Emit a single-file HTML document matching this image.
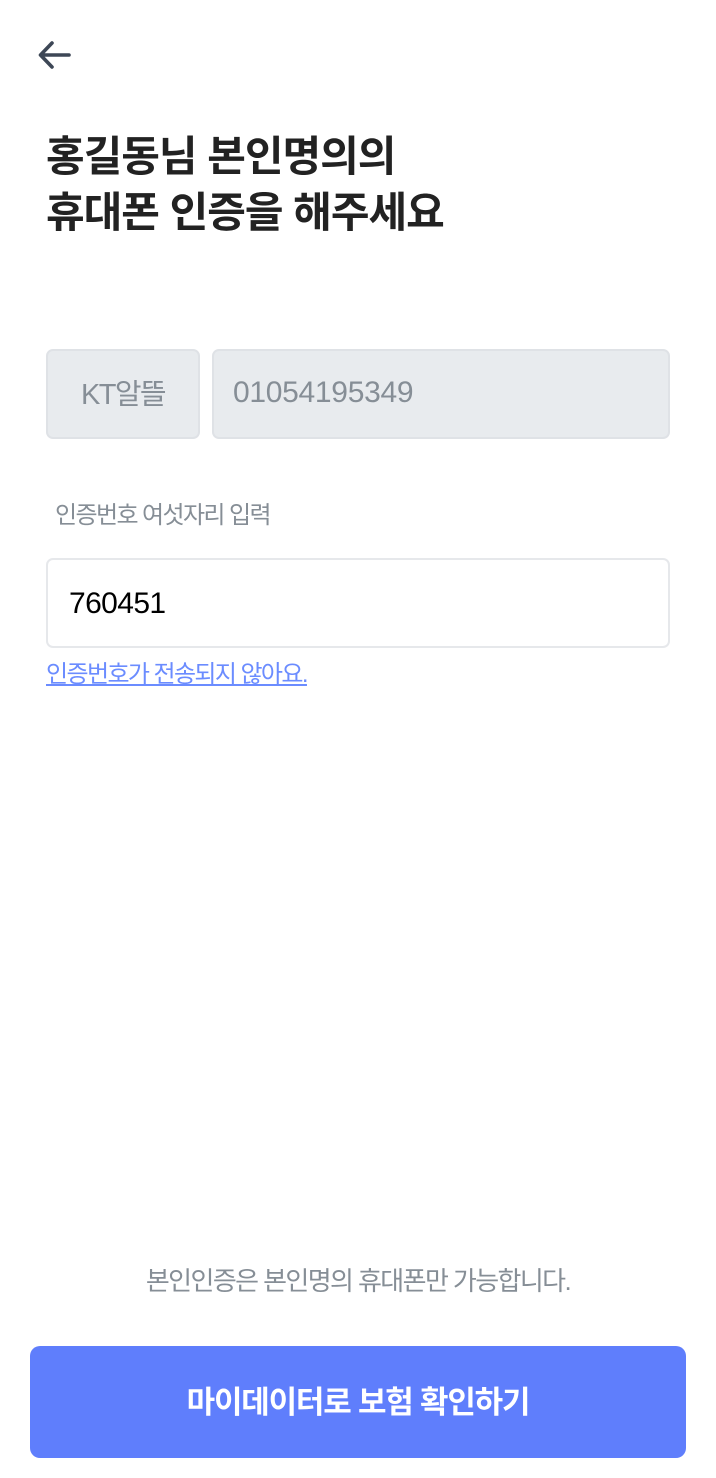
<!DOCTYPE html>
<html><head><meta charset="utf-8"><style>
body{margin:0;width:716px;height:1478px;background:#fff;position:relative;overflow:hidden;font-family:"Liberation Sans","Noto Sans CJK KR",sans-serif;}
.a{position:absolute;line-height:1;white-space:nowrap;}
.t{left:46px;font-size:42px;font-weight:bold;color:#222;letter-spacing:-1px;}
.box{position:absolute;box-sizing:border-box;border-radius:7px;}
</style></head><body>
<svg class="a" style="left:36px;top:38px" width="40" height="34" viewBox="0 0 40 34"><path d="M33 17H5M16 5L4.5 17L16 29" fill="none" stroke="#3d4756" stroke-width="3.6" stroke-linecap="round" stroke-linejoin="round"/></svg>
<div class="a t" style="top:136px">홍길동님 본인명의의</div>
<div class="a t" style="top:192px">휴대폰 인증을 해주세요</div>
<div class="box" style="left:46px;top:349px;width:154px;height:90px;background:#e8ebee;border:2px solid #dfe2e6;"></div>
<div class="a" style="left:46px;top:381px;width:154px;text-align:center;font-size:29px;color:#868e96;letter-spacing:-1.6px;">KT알뜰</div>
<div class="box" style="left:212px;top:349px;width:458px;height:90px;background:#e8ebee;border:2px solid #dfe2e6;"></div>
<div class="a" style="left:233px;top:378px;font-size:30px;color:#868e96;letter-spacing:-0.3px;">01054195349</div>
<div class="a" style="left:55px;top:504px;font-size:24px;color:#868e96;letter-spacing:-1.6px;">인증번호 여섯자리 입력</div>
<div class="box" style="left:46px;top:558px;width:624px;height:90px;background:#fff;border:2px solid #e6e8eb;"></div>
<div class="a" style="left:69px;top:589px;font-size:30px;color:#000;letter-spacing:-0.6px;">760451</div>
<div class="a" style="left:46px;top:663px;font-size:24px;color:#6b8cff;text-decoration:underline;letter-spacing:-1.6px;">인증번호가 전송되지 않아요.</div>
<div class="a" style="left:0;width:716px;top:1268px;text-align:center;font-size:26px;color:#868e96;letter-spacing:-1.6px;">본인인증은 본인명의 휴대폰만 가능합니다.</div>
<div class="box" style="left:30px;top:1346px;width:656px;height:112px;background:#5f7efc;border-radius:10px;"></div>
<div class="a" style="left:30px;width:656px;top:1387px;text-align:center;font-size:31px;font-weight:bold;color:#fff;letter-spacing:-1.2px;">마이데이터로 보험 확인하기</div>
</body></html>
